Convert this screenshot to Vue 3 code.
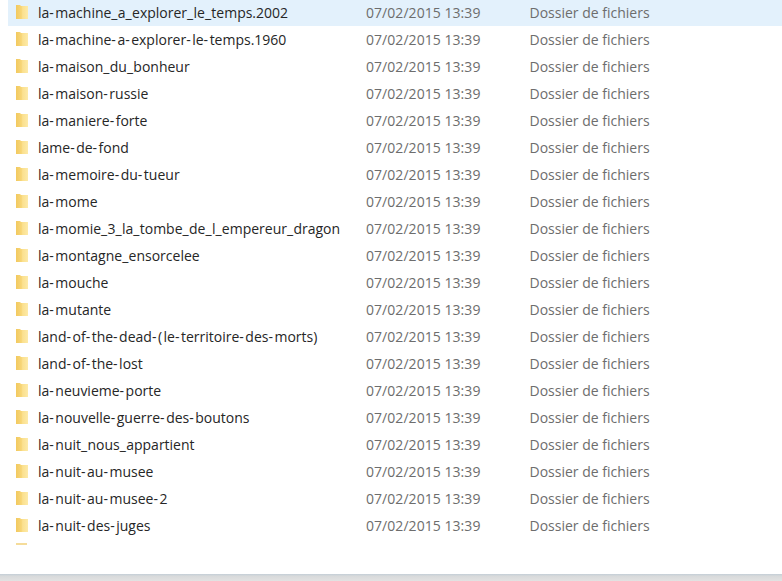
<script setup>
const names = [
  'la-machine_a_explorer_le_temps.2002',
  'la-machine-a-explorer-le-temps.1960',
  'la-maison_du_bonheur',
  'la-maison-russie',
  'la-maniere-forte',
  'lame-de-fond',
  'la-memoire-du-tueur',
  'la-mome',
  'la-momie_3_la_tombe_de_l_empereur_dragon',
  'la-montagne_ensorcelee',
  'la-mouche',
  'la-mutante',
  'land-of-the-dead-(le-territoire-des-morts)',
  'land-of-the-lost',
  'la-neuvieme-porte',
  'la-nouvelle-guerre-des-boutons',
  'la-nuit_nous_appartient',
  'la-nuit-au-musee',
  'la-nuit-au-musee-2',
  'la-nuit-des-juges',
]
// Split a name so separators can be given the wider metrics of the reference font.
const parts = (name) => name.split(/([-_()])/).filter(Boolean)
</script>

<template>
  <div class="window">
    <div class="list">
      <div v-for="(name, i) in names" :key="name" class="row" :class="{ selected: i === 0 }">
        <svg class="folder" viewBox="0 0 12 14">
          <defs>
            <linearGradient :id="'g' + i" x1="0" y1="0" x2="1" y2="0">
              <stop offset="0" stop-color="#f2c95f" />
              <stop offset="0.45" stop-color="#f7d678" />
              <stop offset="0.55" stop-color="#fbe08e" />
              <stop offset="1" stop-color="#fdeaa8" />
            </linearGradient>
          </defs>
          <path d="M0 0h4l1 1h7v13H0z" :fill="'url(#g' + i + ')'" />
        </svg>
        <span class="name"><template v-for="(p, k) in parts(name)" :key="k"><span v-if="p === '-' || p === '(' || p === ')'" class="wide">{{ p }}</span><span v-else-if="p === '_'" class="under">{{ p }}</span><template v-else>{{ p }}</template></template></span>
        <span class="date">07/02/2015 13:39</span>
        <span class="type">Dossier de fichiers</span>
      </div>
      <div class="clipped"><span class="sliver"></span></div>
    </div>
    <div class="bottom"></div>
  </div>
</template>

<style scoped>
.window {
  width: 782px;
  height: 581px;
  display: flex;
  flex-direction: column;
  background: #fff;
  overflow: hidden;
  font-family: "Open Sans", "Noto Sans", sans-serif;
  font-size: 14px;
}
.list {
  flex: 1;
  padding-left: 8px;
}
.row {
  display: flex;
  align-items: center;
  box-sizing: border-box;
  height: 27px;
  padding-bottom: 2px;
  white-space: nowrap;
}
.selected {
  background: #e3f1fc;
  height: 26px;
  padding-bottom: 1px;
  margin-bottom: 1px;
}
.folder {
  margin: 0 0 2px 8px;
  width: 12px;
  height: 14px;
  flex: none;
}
.name {
  width: 328px;
  margin-left: 10px;
  flex: none;
  color: #262626;
}
.wide {
  letter-spacing: 1.5px;
}
.under {
  letter-spacing: 0.3px;
}
.date {
  width: 164px;
  flex: none;
  color: #6d6d6d;
  letter-spacing: 0.05px;
}
.type {
  margin-left: -0.5px;
  color: #6d6d6d;
}
.clipped {
  padding: 3px 0 0 8px;
}
.sliver {
  display: block;
  width: 11px;
  height: 2px;
  background: #f5dc9a;
}
.bottom {
  height: 7px;
  flex: none;
  background: linear-gradient(#c4ced6, #d8dadb 30%, #e2e2e2);
}
</style>
